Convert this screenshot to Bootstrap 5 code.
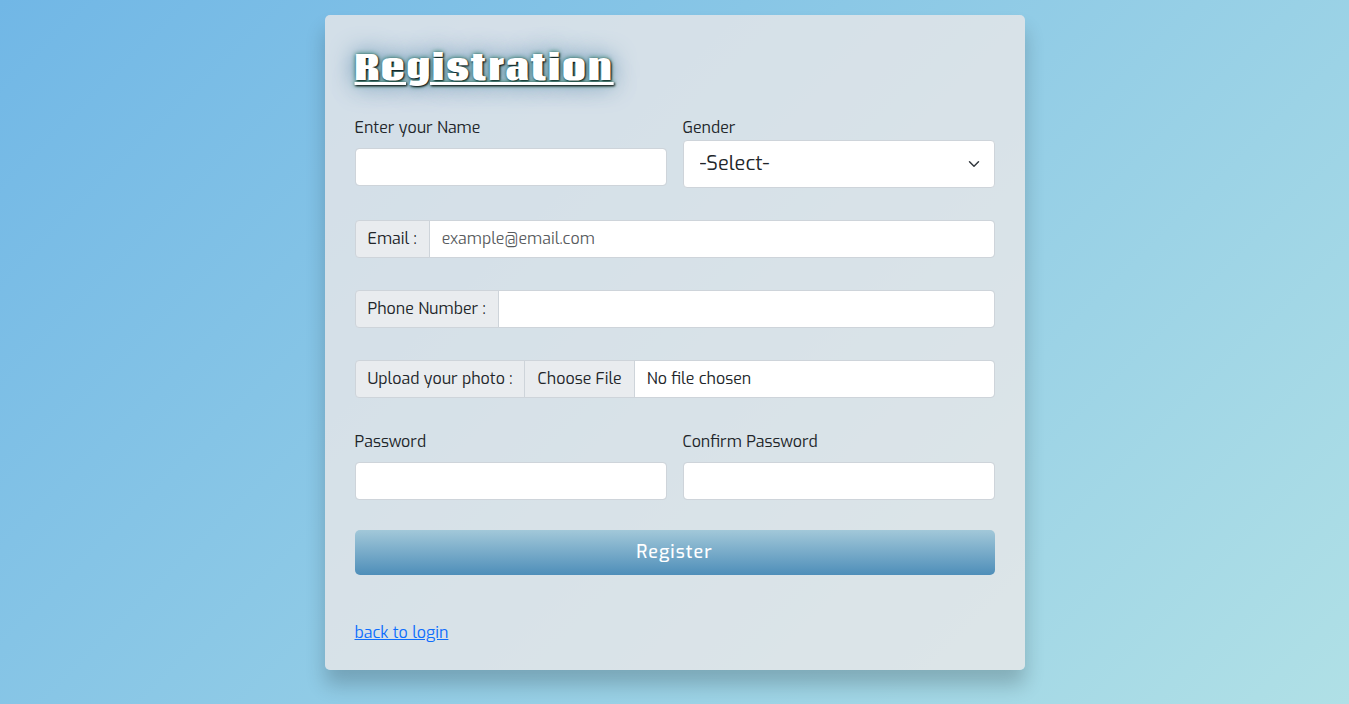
<!DOCTYPE html>
<html lang="en">
<head>
<meta charset="utf-8">
<meta name="viewport" content="width=device-width, initial-scale=1">
<title>Registration</title>
<link href="https://cdn.jsdelivr.net/npm/bootstrap@5.3.0/dist/css/bootstrap.min.css" rel="stylesheet">
<style>
body {
  font-family: Exo, "Exo 2", "Open Sans", sans-serif;
  font-weight: 400;
  background: linear-gradient(135deg, #71b7e6, #b0e0e6);
}
.signup-page { padding: 15px; }
.signup-panel {
  max-width: 700px;
  padding: 30px 30px 25px;
  border-radius: 5px;
  background: rgba(238, 232, 233, .76);
  box-shadow: 0 15px 20px rgba(0, 0, 0, .2);
}
.signup-title {
  margin-bottom: 21px;
  font-family: Coda, "Passion One", Roboto, sans-serif;
  font-size: 33px;
  font-weight: 800;
  line-height: 50px;
  letter-spacing: 2px;
  color: #fff;
  text-decoration: underline;
  text-shadow: 1px 1px 2px #000, 0 0 25px #4a7fa5, 0 0 5px #0a7040;
}
.form-control, .form-select, .input-group-text { border-color: #ced4da; border-radius: 4px; }
.input-group-text, .form-control::file-selector-button { background-color: #e9ecef; }
.signup-select { font-size: 20px; height: 48px; }
.btn-register {
  height: 45px;
  margin: 30px 0 46px;
  border-radius: 5px;
  font-size: 18px;
  font-weight: 500;
  letter-spacing: 1px;
  color: #fff;
  background: linear-gradient(#a2c8d9, #4e8eb9);
}
</style>
</head>
<body class="min-vh-100">
<main class="signup-page d-flex justify-content-center">
  <form class="signup-panel w-100">
    <h1 class="signup-title">Registration</h1>
    <div class="row gx-3 mb-4 pb-2">
      <div class="col-sm-6">
        <label class="form-label" for="name">Enter your Name</label>
        <input class="form-control" id="name" type="text">
      </div>
      <div class="col-sm-6">
        <label class="d-block" for="gender">Gender</label>
        <select class="form-select form-select-lg signup-select" id="gender">
          <option selected>-Select-</option>
          <option>Male</option>
          <option>Female</option>
          <option>Other</option>
        </select>
      </div>
    </div>
    <div class="input-group mb-4 pb-2">
      <label class="input-group-text" for="email">Email :</label>
      <input class="form-control" id="email" type="email" placeholder="example@email.com">
    </div>
    <div class="input-group mb-4 pb-2">
      <label class="input-group-text" for="phone">Phone Number :</label>
      <input class="form-control" id="phone" type="tel">
    </div>
    <div class="input-group mb-4 pb-2">
      <label class="input-group-text" for="photo">Upload your photo :</label>
      <input class="form-control" id="photo" type="file">
    </div>
    <div class="row gx-3">
      <div class="col-sm-6">
        <label class="form-label" for="password">Password</label>
        <input class="form-control" id="password" type="password">
      </div>
      <div class="col-sm-6">
        <label class="form-label" for="confirm">Confirm Password</label>
        <input class="form-control" id="confirm" type="password">
      </div>
    </div>
    <button class="btn btn-register border-0 w-100" type="submit">Register</button>
    <a href="#">back to login</a>
  </form>
</main>
<script src="https://cdn.jsdelivr.net/npm/bootstrap@5.3.0/dist/js/bootstrap.bundle.min.js"></script>
</body>
</html>
